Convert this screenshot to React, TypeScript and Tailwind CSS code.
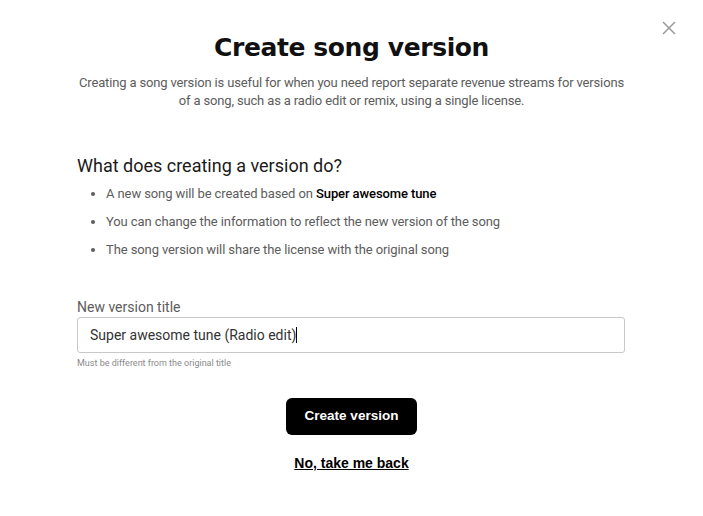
import React from "react";

export default function App() {
  return (
    <div className="w-[703px] h-[516px] bg-white relative" style={{ fontFamily: "Roboto, 'Liberation Sans', sans-serif" }}>
      <button className="absolute left-[662px] top-[21px] w-[14px] h-[14px] text-[#9a9a9a]">
        <svg viewBox="0 0 14 14" width="14" height="14" fill="none" stroke="currentColor" strokeWidth="1.5">
          <path d="M1 1L13 13M13 1L1 13" />
        </svg>
      </button>
      <div className="flex flex-col items-center pt-[31px]">
        <h1 className="text-[25px] leading-[34px] font-bold text-[#111] tracking-[-0.4px]" style={{ fontFamily: "'DejaVu Sans', sans-serif" }}>
          Create song version
        </h1>
        <p className="mt-[9px] text-[13px] leading-[18px] text-[#5c5c5c] text-center w-[548px] tracking-[-0.15px]">
          Creating a song version is useful for when you need report separate revenue streams for versions of a song, such as a radio edit or remix, using a single license.
        </p>
      </div>
      <div className="px-[77px] mt-[44px]">
        <h2 className="text-[18px] leading-[24px] text-[#1a1a1a]">What does creating a version do?</h2>
        <ul className="mt-[7px] flex flex-col gap-[10px] text-[13px] leading-[18px] text-[#5c5c5c] list-disc pl-[29px] tracking-[-0.1px]">
          <li>A new song will be created based on <span className="font-medium text-black">Super awesome tune</span></li>
          <li>You can change the information to reflect the new version of the song</li>
          <li>The song version will share the license with the original song</li>
        </ul>
        <label className="block mt-[39px] text-[14px] leading-[18px] text-[#5c5c5c]">New version title</label>
        <div className="mt-[1px] h-[36px] w-[548px] border border-[#c8c8c8] rounded-[3px] flex items-center px-[12px] text-[14px] text-[#333]">
          Super awesome tune (Radio edit)<span className="inline-block w-[1px] h-[16px] bg-black" />
        </div>
        <div className="mt-[4px] text-[9px] leading-[12px] text-[#8a8a8a]">Must be different from the original title</div>
      </div>
      <div className="flex flex-col items-center mt-[29px]">
        <button className="h-[37px] px-[19px] bg-black text-white rounded-[6px] text-[13.5px] font-bold" style={{ fontFamily: "'Liberation Sans', Arial, sans-serif" }}>
          Create version
        </button>
        <a className="mt-[19px] text-[14px] leading-[18px] text-black underline font-bold" style={{ fontFamily: "'Liberation Sans', Arial, sans-serif" }}>
          No, take me back
        </a>
      </div>
    </div>
  );
}
